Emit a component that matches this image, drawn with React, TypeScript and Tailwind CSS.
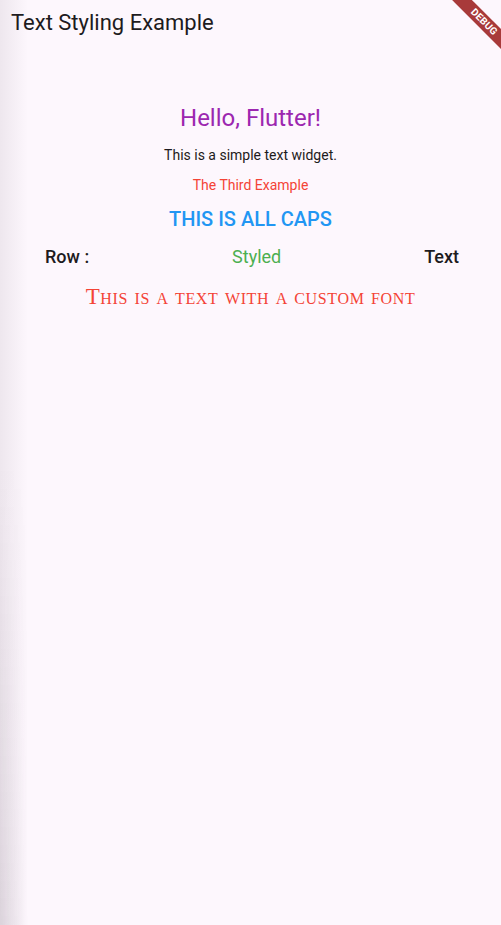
import React from "react";

export default function App() {
  return (
    <div
      className="relative w-[501px] h-[925px] overflow-hidden bg-[#fdf7fd]"
      style={{ fontFamily: "Roboto, 'Noto Sans', sans-serif" }}
    >
      <div className="h-[46px] flex items-center pl-[11px]">
        <span className="text-[22px] text-[#1d1b20] leading-none">Text Styling Example</span>
      </div>
      <div className="flex flex-col items-center pt-[58px]">
        <div className="text-[24px] leading-[28px] text-[#9c27b0]">Hello, Flutter!</div>
        <div className="mt-[15px] text-[14px] leading-[17px] text-[#1d1b20]">This is a simple text widget.</div>
        <div className="mt-[13px] text-[14px] leading-[17px] text-[#f44336]">The Third Example</div>
        <div className="mt-[13px] text-[20px] leading-[24px] font-medium text-[#2196f3]">THIS IS ALL CAPS</div>
        <div className="mt-[15px] w-full flex justify-between items-center pl-[45px] pr-[42px]">
          <span className="text-[18px] leading-[21px] font-medium text-[#1d1b20]">Row :</span>
          <span className="text-[18px] leading-[21px] text-[#4caf50]">Styled</span>
          <span className="text-[18px] leading-[21px] font-medium text-[#1d1b20]">Text</span>
        </div>
        <div
          className="mt-[17px] text-[23px] leading-[26px] text-[#f44336] tracking-[0.65px]"
          style={{ fontFamily: "'Liberation Serif', serif", fontVariant: "small-caps" }}
        >
          This is a text with a custom font
        </div>
      </div>
      <div className="pointer-events-none absolute left-0 top-0 h-full w-[28px] bg-gradient-to-r from-[rgba(60,40,60,0.08)] to-transparent" />
      <div className="pointer-events-none absolute left-0 top-0 h-full w-[28px] bg-gradient-to-b from-transparent via-transparent to-[rgba(60,40,60,0.1)] [mask-image:linear-gradient(to_right,black,transparent)]" />
      <div className="pointer-events-none absolute top-0 right-0 w-[80px] h-[80px] overflow-hidden">
        <div className="absolute left-[3px] top-[15px] w-[120px] h-[14px] rotate-45 bg-[#a83a3a] flex items-center justify-center">
          <span className="text-white text-[10px] font-bold leading-none tracking-[0.2px]">DEBUG</span>
        </div>
      </div>
    </div>
  );
}
